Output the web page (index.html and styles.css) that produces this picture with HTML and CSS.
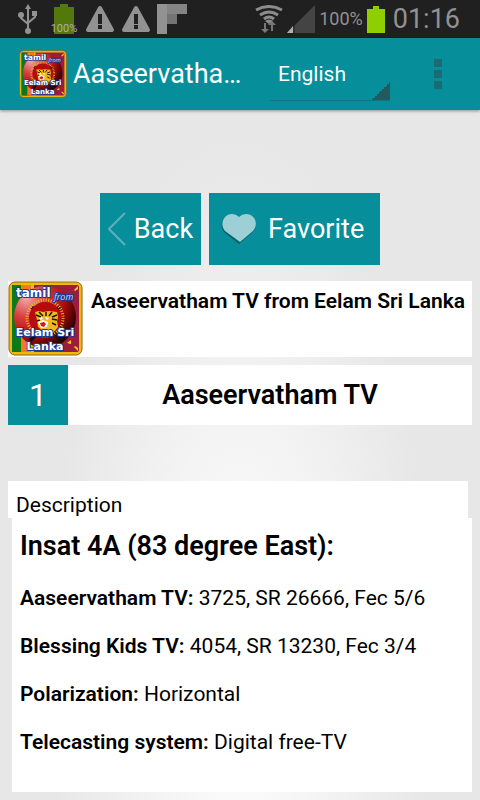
FILE: index.html
```html
<!DOCTYPE html>
<html lang="en">
<head>
  <meta charset="UTF-8" />
  <meta name="viewport" content="width=device-width, initial-scale=1.0" />
  <title>Aaseervatham TV</title>
  <link rel="stylesheet" href="styles.css">
</head>

<body>
  <!-- Channel logo, used in the header and the channel card -->
  <svg class="defs" aria-hidden="true">
    <defs>
      <radialGradient id="disc" cx="0.2" cy="0.2" r="0.9">
        <stop offset="0" stop-color="#f0a8a8" />
        <stop offset="0.35" stop-color="#d83c3c" />
        <stop offset="0.7" stop-color="#a80c0c" />
        <stop offset="1" stop-color="#240000" />
      </radialGradient>
      <symbol id="logo" viewBox="0 0 75 75">
        <rect x="1" y="1" width="73" height="73" rx="6" fill="#f2b90c" stroke="#8a6410" stroke-width="1" />
        <rect x="4" y="4" width="67" height="67" rx="2" fill="#9c1c3c" />
        <path d="M4 4h9v67H4z" fill="#0c7a18" />
        <path d="M13 4h10v67H13z" fill="#f27a20" />
        <path d="M23 4h3v67h-3z" fill="#f2b90c" />
        <path d="M66 9l4-4v3l-3 2zM66 66l4 4v-3l-3-2zM59 62l4-3v4z" fill="#ffcf10" />
        <circle cx="37" cy="36" r="31" fill="url(#disc)" />
        <path d="M22 60l30-34M54 60L24 26" stroke="#1c0c0c" stroke-width="4" />
        <circle cx="37" cy="37" r="16" fill="#b80c0c" />
        <circle cx="37" cy="37" r="18" fill="none" stroke="#f0b820" stroke-width="3" stroke-dasharray="1 1.5" />
        <path d="M27 31l4-1 4 1 6-1 8 1 1 5-1 4 1 6-5 6-9-1-6-5-1-7z" fill="#f2b820" />
        <path d="M28 34l5 2M31 31l4 4M38 31v4M44 31l-3 4M49 34l-5 2M49 39l-5-1M29 40l3-1M48 44l-4-2" stroke="#201408" stroke-width="1.5" />
        <path d="M31 37l3-1 1 2-3 1zM37 36l4 1-2 2z" fill="#fff" />
        <path d="M30 41l5-2 5 2-1 5-6 1z" fill="#fff" />
        <path d="M32 42l4-1 2 2-2 3-3-1z" fill="#d01818" />
        <g class="logo-text">
          <text x="8" y="16" font-size="12">tamil</text>
          <text class="logo-from" x="46" y="19" font-size="9">from</text>
          <text x="37" y="55" font-size="11" text-anchor="middle">Eelam Sri</text>
          <text x="37" y="69" font-size="11" text-anchor="middle">Lanka</text>
        </g>
      </symbol>
    </defs>
  </svg>

  <!-- Status bar -->
  <div class="status-bar">
    <div class="status-left">
      <svg width="20" height="30" viewBox="0 0 20 30" fill="none" stroke="#929292" stroke-width="2">
        <path d="M10 4v21M3 10v4l7 6M17 10v3l-7 6" />
        <path d="M10 0l3 5H7zM14 7h5v5h-5z" fill="#929292" stroke="none" />
        <circle cx="3" cy="11" r="3" fill="#929292" stroke="none" />
        <circle cx="10" cy="27" r="3" fill="#929292" stroke="none" />
      </svg>
      <div class="battery-app">
        <svg width="20" height="30" viewBox="0 0 20 30"><path d="M6 0h8v3h6v27H0V3h6z" fill="#55780c" /></svg>
        <span>100%</span>
      </div>
      <svg width="30" height="28" viewBox="0 0 30 28">
        <path d="M15 3L27 25H3z" fill="#929292" stroke="#929292" stroke-width="4" stroke-linejoin="round" />
        <path d="M13 9h4v10h-4zM13 20h4v4h-4z" fill="#202020" />
      </svg>
      <svg width="30" height="28" viewBox="0 0 30 28">
        <path d="M15 3L27 25H3z" fill="#929292" stroke="#929292" stroke-width="4" stroke-linejoin="round" />
        <path d="M13 9h4v10h-4zM13 20h4v4h-4z" fill="#202020" />
      </svg>
      <svg width="30" height="30" viewBox="0 0 30 30">
        <path d="M0 0h10v30H0z" fill="#929292" />
        <path d="M10 0h20v10H10z" fill="#848484" />
        <path d="M10 10h10v10H10z" fill="#747474" />
      </svg>
    </div>
    <div class="status-right">
      <svg width="28" height="28" viewBox="0 0 28 28" fill="none" stroke="#8c8c8c" stroke-width="3">
        <path d="M1 5q13-7 26 0M5 10q9-6 18 0M9 14q5-4 10 0" />
        <path d="M10 16q4-3 8 0l-4 3z" fill="#8c8c8c" stroke="none" />
        <path d="M11 18v6h3l-4 4-4-4h3v-6zM16 26v-6h-3l4-4 4 4h-3v6z" fill="#777" stroke="none" />
      </svg>
      <svg width="28" height="28" viewBox="0 0 28 28">
        <path d="M28 0v28H0z" fill="#444" />
        <path d="M6 21v7H0z" fill="#b0b0b0" />
        <path d="M7 20v8" stroke="#202020" stroke-width="1" />
      </svg>
      <span class="percent">100%</span>
      <svg width="18" height="27" viewBox="0 0 18 27"><path d="M6 0h6v3h6v24H0V3h6z" fill="#8fce00" /></svg>
      <span class="clock">01:16</span>
    </div>
  </div>

  <header>
    <svg class="header-logo" role="img" aria-label="Aaseervatham TV logo"><use href="#logo" /></svg>
    <h1>Aaseervatha…</h1>
    <select class="language" aria-label="Language">
      <option>English</option>
    </select>
    <button class="menu" aria-label="More options">
      <svg width="8" height="30" viewBox="0 0 8 30"><path d="M0 0h8v8H0zM0 11h8v8H0zM0 22h8v8H0z" fill="#1a6b73" /></svg>
    </button>
  </header>

  <main>
    <div class="actions">
      <button class="back">
        <svg width="18" height="34" viewBox="0 0 18 34"><path d="M17 1L1 17l16 16" fill="none" stroke="#5fb0b8" stroke-width="2" /></svg>
        Back
      </button>
      <button class="favorite">
        <svg width="36" height="30" viewBox="0 0 36 30">
          <path d="M18 30L3 18C-3 10 3 0 11 1q4 0 7 3 3-3 7-3c9-1 13 10 7 17z" fill="#08616a" />
          <path d="M19 28L4 17C-2 10 3 0 11 0q4 0 7 3 3-3 7-3c9 0 13 10 7 17z" fill="#9dd0d6" />
        </svg>
        Favorite
      </button>
    </div>

    <section class="channel">
      <svg class="channel-logo" role="img" aria-label="Aaseervatham TV logo"><use href="#logo" /></svg>
      <h2>Aaseervatham TV from Eelam Sri Lanka</h2>
    </section>

    <section class="channel-row">
      <span class="number">1</span>
      <h3>Aaseervatham TV</h3>
    </section>

    <section class="description">
      <div class="description-title">Description</div>
      <div class="description-body">
        <h3>Insat 4A (83 degree East):</h3>
        <p><b>Aaseervatham TV:</b> 3725, SR 26666, Fec 5/6</p>
        <p><b>Blessing Kids TV:</b> 4054, SR 13230, Fec 3/4</p>
        <p><b>Polarization:</b> Horizontal</p>
        <p><b>Telecasting system:</b> Digital free-TV</p>
      </div>
    </section>
  </main>
</body>
</html>
```
FILE: styles.css
```css
:root {
  --primary: #068e9a;
  --bar: #202020;
  --card-bg: #fff;
  --text: #000;
}

* {
  box-sizing: border-box;
}

body {
  font-family: Roboto, "Liberation Sans", sans-serif;
  font-size: 21px;
  line-height: 24px;
  margin: 0;
  min-height: 100vh;
  background: radial-gradient(ellipse at 50% 85%, #fff 0%, #e7e7e7 56%) #e7e7e7;
  color: var(--text);
}

h1, h2, h3, p {
  margin: 0;
}

h2, h3, b {
  font-weight: 600;
}

button, select {
  font: inherit;
  color: #fff;
  border: none;
  border-radius: 0;
  cursor: pointer;
}

svg {
  display: block;
  flex: none;
}

.defs {
  position: absolute;
  width: 0;
  height: 0;
}

/* Channel logo lettering */
.logo-text {
  font-family: "DejaVu Sans", sans-serif;
  font-weight: bold;
  fill: #fff;
  stroke: #1c3c98;
  stroke-width: 2px;
  stroke-linejoin: round;
  paint-order: stroke;
}

.logo-from {
  font-family: "Open Sans", sans-serif;
  font-style: italic;
  font-weight: normal;
  fill: #c8dcff;
}

/* Status bar */
.status-bar {
  display: flex;
  justify-content: space-between;
  height: 38px;
  padding: 0 20px 0 18px;
  background: var(--bar);
  color: #929292;
}

.status-left,
.status-right {
  display: flex;
  align-items: center;
}

.status-left {
  gap: 6px;
}

.status-right {
  gap: 4px;
}

.battery-app {
  position: relative;
  margin: 0 5px 0 10px;
}

.battery-app span {
  position: absolute;
  left: -4px;
  right: -4px;
  bottom: 0;
  font-size: 11px;
  line-height: 10px;
  text-align: center;
  color: #b0b0b0;
}

.percent {
  font-size: 18px;
}

.clock {
  padding-left: 4px;
  font-size: 27px;
}

/* Header */
header {
  position: relative;
  display: flex;
  align-items: center;
  height: 72px;
  padding: 0 30px 0 19px;
  background: var(--primary);
  color: #fff;
  box-shadow: 0 1px 3px rgba(0, 0, 0, 0.4);
}

.header-logo {
  width: 48px;
  height: 48px;
}

header h1 {
  flex: 1;
  margin-left: 6px;
  font-size: 27px;
  font-weight: normal;
  line-height: 32px;
  white-space: nowrap;
}

.language {
  appearance: none;
  width: 120px;
  height: 54px;
  padding: 0 8px;
  border-bottom: 1px solid #0b7580;
  background: linear-gradient(135deg, transparent 50%, #235a60 50%) right bottom / 18px 18px no-repeat;
}

.menu {
  margin-left: 36px;
  padding: 8px;
  background: none;
}

/* Page content */
main {
  padding: 83px 8px 8px;
}

.actions {
  display: flex;
  justify-content: center;
  gap: 8px;
  margin-bottom: 16px;
}

.actions button {
  display: flex;
  align-items: center;
  height: 72px;
  background: var(--primary);
  font-size: 27px;
}

.back {
  gap: 8px;
  padding: 0 8px;
}

.favorite {
  gap: 11px;
  padding: 0 16px 0 12px;
}

/* Channel card */
.channel {
  display: flex;
  gap: 8px;
  min-height: 76px;
  margin-bottom: 8px;
  background: var(--card-bg);
}

.channel-logo {
  width: 75px;
  height: 75px;
}

.channel h2 {
  padding-top: 8px;
  font-size: 21px;
  line-height: 24px;
}

.channel-row {
  display: flex;
  align-items: center;
  min-height: 60px;
  margin-bottom: 56px;
  background: var(--card-bg);
}

.channel-row h3 {
  flex: 1;
  font-size: 27px;
  line-height: 32px;
  text-align: center;
}

.number {
  width: 60px;
  background: var(--primary);
  color: #fff;
  font-size: 32px;
  line-height: 60px;
  text-align: center;
}

/* Description */
.description-title {
  margin-right: 4px;
  padding: 12px 8px 1px;
  background: var(--card-bg);
}

.description-body {
  margin-left: 4px;
  padding: 12px 8px 38px;
  background: var(--card-bg);
}

.description-body h3 {
  margin-bottom: 24px;
  font-size: 27px;
  line-height: 32px;
}

.description-body p + p {
  margin-top: 24px;
}
```
